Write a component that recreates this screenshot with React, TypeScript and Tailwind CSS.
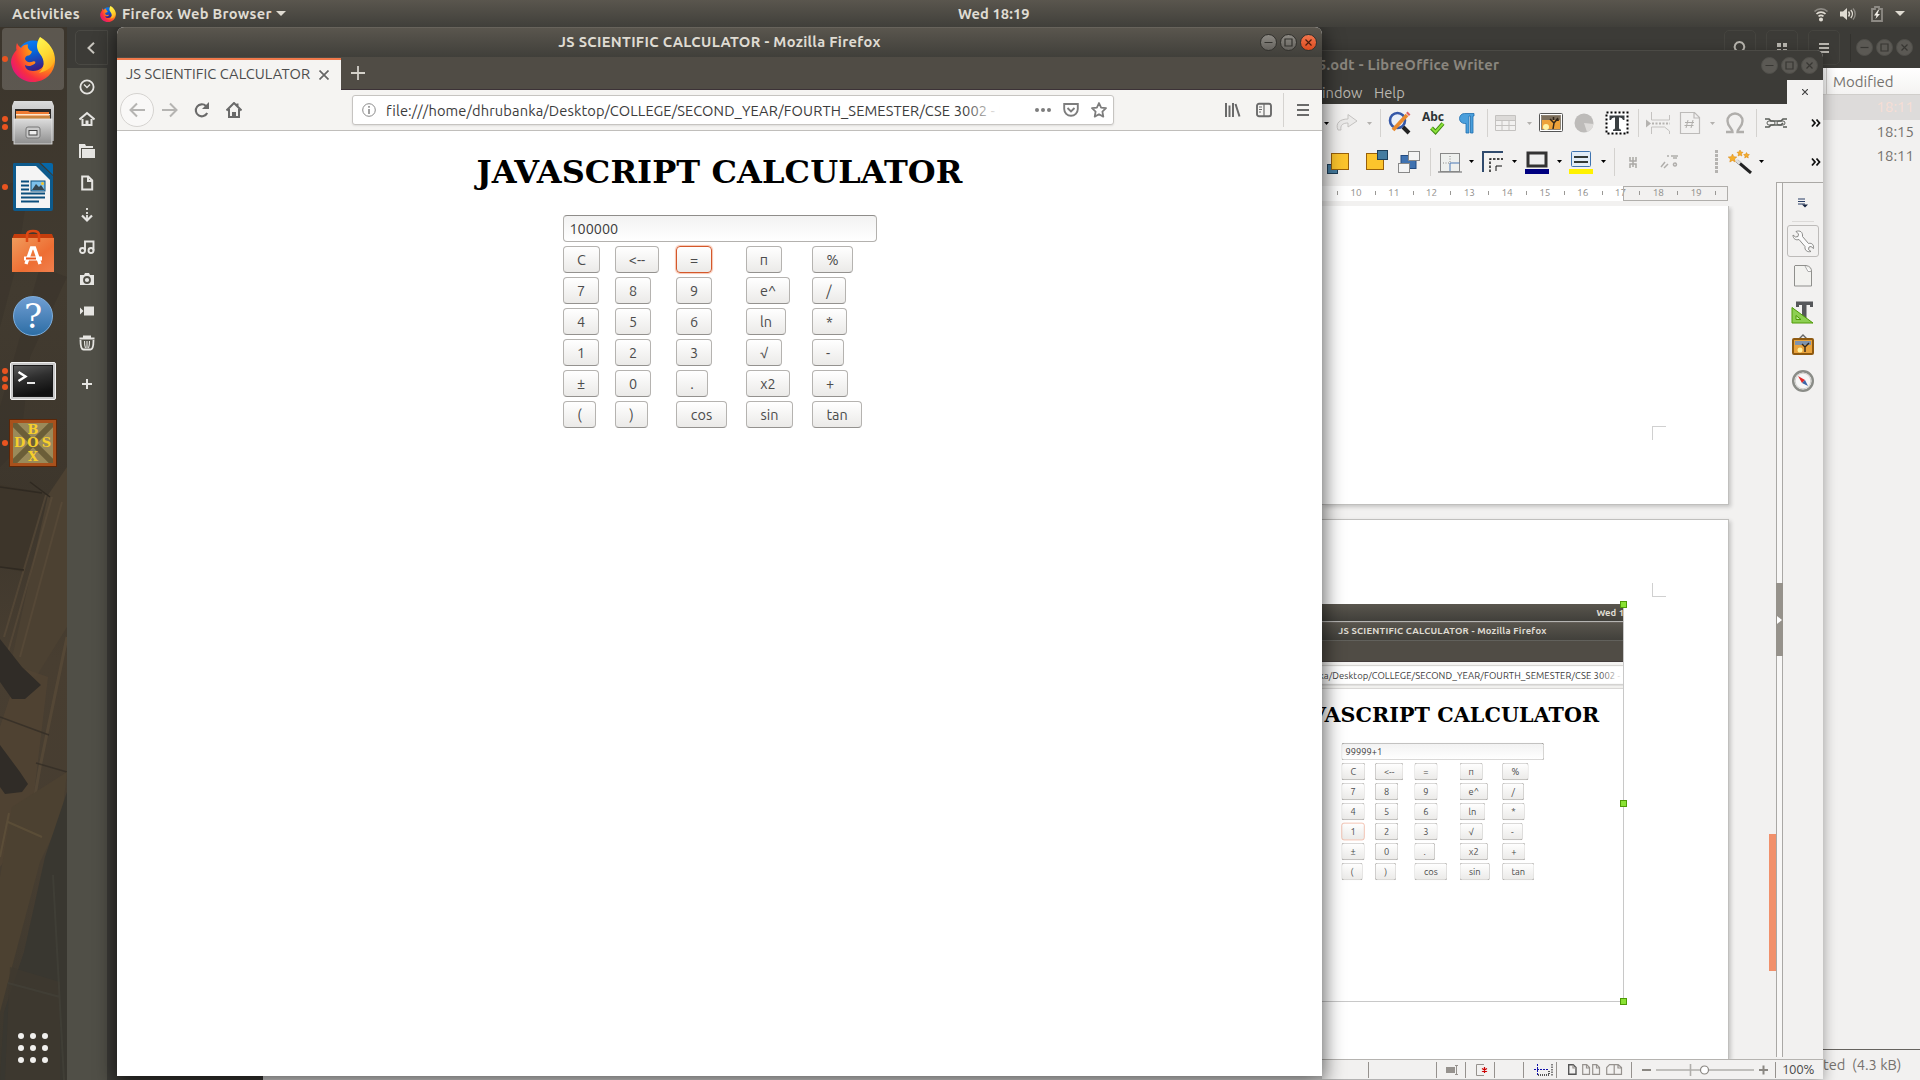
import React from "react";

type Kids = { children?: React.ReactNode };

const UI = "font-['Ubuntu','Noto_Sans',sans-serif]";

const calcRows: [string, string][][] = [
  [["C", "w-[37px]"], ["<--", "w-[44px]"], ["=", "w-[36px]"], ["п", "w-[36px]"], ["%", "w-[41px]"]],
  [["7", "w-[36px]"], ["8", "w-[36px]"], ["9", "w-[36px]"], ["e^", "w-[44px]"], ["/", "w-[34px]"]],
  [["4", "w-[36px]"], ["5", "w-[36px]"], ["6", "w-[36px]"], ["ln", "w-[40px]"], ["*", "w-[35px]"]],
  [["1", "w-[36px]"], ["2", "w-[36px]"], ["3", "w-[36px]"], ["√", "w-[36px]"], ["-", "w-[32px]"]],
  [["±", "w-[36px]"], ["0", "w-[36px]"], [".", "w-[32px]"], ["x2", "w-[44px]"], ["+", "w-[36px]"]],
  [["(", "w-[33px]"], [")", "w-[33px]"], ["cos", "w-[51px]"], ["sin", "w-[47px]"], ["tan", "w-[50px]"]],
];

function Calculator({ value, focus, dim }: { value: string; focus: string; dim?: boolean }) {
  const focusRing = dim ? "border-[#eba48a]" : "border-[#d4582b] shadow-[0_0_1px_1px_#f7c5b1]";
  return (
    <div className="w-[314px]">
      <div className="flex h-[27px] items-center rounded-[4px] border border-[#b3b1ae] border-t-[#8f8d8a] bg-linear-to-b from-[#f2f2f2] to-white pt-[2px] pl-1.5 text-[14.4px] text-[#3c3c3c]">
        {value}
      </div>
      <div className="mt-1 flex flex-col gap-1">
        {calcRows.map((row, i) => (
          <div key={i} className="grid grid-cols-[52px_61px_70px_66px_65px]">
            {row.map(([t, w]) => (
              <button
                key={t}
                className={`${w} flex h-[27px] items-center justify-center rounded-[4px] border pt-px pl-px text-[14.4px] leading-none text-[#4c4c4c] bg-linear-to-b from-white to-[#ebeae8] ${
                  t === focus ? focusRing : "border-[#b5b3b0] border-b-[#94928f]"
                }`}
              >
                {t}
              </button>
            ))}
          </div>
        ))}
      </div>
    </div>
  );
}

function FirefoxLogo({ className }: { className: string }) {
  const id = React.useId().replace(/[^a-zA-Z0-9]/g, "");
  return (
    <svg viewBox="0 0 44 45" className={className}>
      <defs>
        <radialGradient id={id + "a"} cx="0.85" cy="0.2" r="1">
          <stop offset="0" stopColor="#fff04a" />
          <stop offset="0.3" stopColor="#ffb916" />
          <stop offset="0.55" stopColor="#ff7a1c" />
          <stop offset="0.78" stopColor="#f8303f" />
          <stop offset="1" stopColor="#e3137f" />
        </radialGradient>
        <linearGradient id={id + "b"} x1="0" y1="0" x2="0.3" y2="1">
          <stop offset="0" stopColor="#0a84ff" />
          <stop offset="0.5" stopColor="#0663d8" />
          <stop offset="1" stopColor="#3a1f86" />
        </linearGradient>
        <linearGradient id={id + "c"} x1="0.3" y1="0" x2="0.7" y2="1">
          <stop offset="0" stopColor="#fff44f" />
          <stop offset="0.5" stopColor="#ffd832" />
          <stop offset="1" stopColor="#ffa21a" />
        </linearGradient>
      </defs>
      <circle cx="22" cy="19" r="15.5" fill={`url(#${id}b)`} />
      <path d="M6 6C5 9 5 11 5.500 13C2 17 0 21 0 25C1 37 11 45 22 45C34 45 44 36 44 23C44 14 39 6 29 0C31 8 36 12 35 21C34 30 29 34 22 34C17 34 14 31 14 28C17 30 21 29 24 26.500C25 25 24 24 22 24.500C18 26 15 25 14 22C14 20 16 18 18 18.500C20 17 20.500 16 21 14.500C18 13 16 11 17 7.500C14 7 11 9 10 11C8 9.500 7 8 6 6Z" fill={`url(#${id}a)`} />
      <path d="M29 0C25 6 25 12 29 17C34 23 34 31 28 36C37 34 43 29 43.500 22C42 12 37 6 29 0Z" fill={`url(#${id}c)`} />
    </svg>
  );
}

function TopBar() {
  return (
    <div className={`flex h-[27px] items-center bg-linear-to-b from-[#5a564e] to-[#403f3a] text-[14.67px] font-bold text-[#dfdbd2] ${UI}`}>
      <span className="ml-3 w-[88px] tracking-[0.27px] whitespace-nowrap">Activities</span>
      <FirefoxLogo className="h-4 w-4" />
      <span className="ml-1.5 w-[154px] tracking-[0.32px] whitespace-nowrap">Firefox Web Browser</span>
      <Caret className="h-[5px] w-2.5 text-[#dfdbd2]" />
      <span className="ml-[672px] tracking-[0.1px] whitespace-nowrap">Wed 18:19</span>
      <div className="ml-auto flex items-center pr-[15px]">
        <svg viewBox="0 0 16 16" className="h-4 w-4" fill="none" stroke="#dfdbd2" strokeWidth="1.700">
          <path d="M1.500 5.500a9.500 9.500 0 0 1 13 0" stroke="#8d8a84" />
          <path d="M3.500 8a6.500 6.500 0 0 1 9 0M5.500 10.300a4 4 0 0 1 5 0" />
          <circle cx="8" cy="13.500" r="1.200" fill="#dfdbd2" />
        </svg>
        <svg viewBox="0 0 16 16" className="ml-[11px] h-4 w-4" fill="none" stroke="#dfdbd2" strokeWidth="1.400">
          <path d="M0 5.500h3L7 2v12L3 10.500H0z" fill="#dfdbd2" stroke="none" />
          <path d="M8.500 5.500a4 4 0 0 1 0 5M10.800 4a6 6 0 0 1 0 8" />
          <path d="M13 2.500a8 8 0 0 1 0 11" stroke="#8d8a84" />
        </svg>
        <svg viewBox="0 0 12 16" className="ml-[15px] h-4 w-3">
          <path d="M4 1h4v2h3v12H1V3h3z" fill="none" stroke="#8d8a84" strokeWidth="1.800" />
          <path d="M7 4L3 9.500h2.500L4.500 13L9 8H6.500L8 4z" fill="#f0ede6" />
        </svg>
        <Caret className="ml-3 h-[5px] w-2.5 text-[#dfdbd2]" />
      </div>
    </div>
  );
}

function Caret({ className }: { className: string }) {
  return (
    <svg viewBox="0 0 10 5" className={className} preserveAspectRatio="none">
      <path d="M0 0h10L5 5z" fill="currentColor" />
    </svg>
  );
}

function WinButtons({ active, className = "" }: { active?: boolean; className?: string }) {
  const ring = active
    ? "border-[#33322e] bg-linear-to-b from-[#8d8a84] to-[#65635e] text-[#33322e]"
    : "border-[#504f4a] bg-[#5b5954] text-[#383733]";
  const close = active ? "border-[#33322e] bg-linear-to-b from-[#f1754c] to-[#dc4a1c] text-[#4a1c0c]" : ring;
  return (
    <div className={`flex gap-[3px] ${className}`}>
      {["M4.500 8.500h8", "M5 5h7v7H5z", "M5.500 5.500l6 6M11.500 5.500l-6 6"].map((d, i) => (
        <span key={d} className={`flex h-[17px] w-[17px] items-center justify-center rounded-full border ${i === 2 ? close : ring}`}>
          <svg viewBox="0 0 17 17" className="h-[17px] w-[17px] shrink-0" fill="none" stroke="currentColor" strokeWidth="1.200">
            <path d={d} />
          </svg>
        </span>
      ))}
    </div>
  );
}

function FirefoxWindow({ value, focus, shadow, dim }: { value: string; focus: string; shadow: string; dim?: boolean }) {
  return (
    <div className={`flex h-[1049px] w-[1205px] flex-col overflow-hidden rounded-t-[7px] bg-white ${UI} ${shadow}`}>
      <div className="grid h-[30px] shrink-0 grid-cols-[1fr_auto_1fr] items-center border-t border-[#67635b] bg-linear-to-b from-[#5a564e] to-[#403f3a]">
        <span />
        <span className="-mt-0.5 text-[14.67px] font-bold tracking-[0.32px] whitespace-nowrap text-[#dfdbd2]">JS SCIENTIFIC CALCULATOR - Mozilla Firefox</span>
        <WinButtons active className="mr-[5px] justify-self-end" />
      </div>
      <div className="flex h-[33px] shrink-0 border-b border-[#3c3237] bg-[#504c45]">
        <div className="mt-px -mb-px flex h-8 w-[224px] items-center border-t-2 border-[#f0794b] bg-[#f5f4f2] pl-[9px]">
          <span className="-mt-0.5 w-[193px] text-[14.67px] tracking-[0.05px] whitespace-nowrap text-[#4c4c4c]">JS SCIENTIFIC CALCULATOR</span>
          <svg viewBox="0 0 10 10" className="-mt-px h-2.5 w-2.5" stroke="#666" strokeWidth="1.700"><path d="M.5.500l9 9M9.500.500l-9 9" /></svg>
        </div>
        <svg viewBox="0 0 14 14" className="mt-[9px] ml-[10px] h-3.5 w-3.5" stroke="#d4d1ca" strokeWidth="1.800"><path d="M7 0v14M0 7h14" /></svg>
      </div>
      <div className="flex h-[41px] shrink-0 items-center border-b border-[#c0bebb] bg-[#f5f4f2] text-[#6a6a6a]">
        <span className="ml-[3px] flex h-[34px] w-[34px] items-center justify-center rounded-full border border-[#d5d3d0] bg-[#f9f8f7]">
          <svg viewBox="0 0 16 16" className="h-4 w-4" fill="none" stroke="#b5b4b2" strokeWidth="2"><path d="M16 8H1.500M8 1.500L1.500 8L8 14.500" /></svg>
        </span>
        <svg viewBox="0 0 16 16" className="ml-2 h-4 w-4" fill="none" stroke="#b5b4b2" strokeWidth="2"><path d="M0 8h14.500M8 1.500L14.500 8L8 14.500" /></svg>
        <svg viewBox="0 0 16 16" className="ml-[16px] h-4 w-4" fill="none" stroke="currentColor" strokeWidth="2.100">
          <path d="M13.200 11A6 6 0 1 1 12 4" /><path d="M15 0v7H8z" fill="currentColor" stroke="none" />
        </svg>
        <svg viewBox="0 0 16 16" className="ml-[16px] h-4 w-4" fill="none" stroke="currentColor" strokeWidth="2">
          <path d="M0.500 8.500L8 1L15.500 8.500M3 7v8h10V7M11.500 4V1.500" /><path d="M6 15v-5h4v5z" fill="currentColor" stroke="none" />
        </svg>
        <div className="ml-[110px] flex h-[30px] w-[762px] items-center rounded-[3px] border border-[#c6c4c1] bg-white pl-2.5 shadow-[0_1px_2px_#00000018]">
          <svg viewBox="0 0 14 14" className="-ml-px h-3.5 w-3.5" fill="none" stroke="#8a8a8a"><circle cx="7" cy="7" r="6.300" /><path d="M7 6v5M7 3v1.800" strokeWidth="1.600" /></svg>
          <div className="relative mt-0.5 ml-[10px] w-[614px] overflow-hidden text-[14.67px] tracking-[0.12px] whitespace-nowrap text-[#3c3c3c]">
            file:///home/dhrubanka/Desktop/COLLEGE/SECOND_YEAR/FOURTH_SEMESTER/CSE 3002 - I
            <span className="absolute inset-y-0 right-0 w-9 bg-linear-to-r from-transparent to-white" />
          </div>
          <svg viewBox="0 0 16 4" className="ml-[35px] h-1 w-4" fill="#7d7d7d"><circle cx="2" cy="2" r="2" /><circle cx="8" cy="2" r="2" /><circle cx="14" cy="2" r="2" /></svg>
          <svg viewBox="0 0 16 16" className="ml-3 h-4 w-4" fill="none" stroke="#7d7d7d" strokeWidth="1.900">
            <path d="M1.200 2h13.600v5a6.800 6.800 0 0 1-13.600 0z" /><path d="M4.500 6L8 9.500L11.500 6" />
          </svg>
          <svg viewBox="0 0 16 16" className="ml-3 h-4 w-4" fill="none" stroke="#7d7d7d" strokeWidth="1.800"><path d="M8 1l2.100 4.600 4.900.6-3.600 3.400.9 5L8 12.200l-4.300 2.400.9-5L1 6.200l4.900-.6z" strokeLinejoin="round" /></svg>
        </div>
        <svg viewBox="0 0 16 16" className="ml-[111px] h-4 w-4" fill="none" stroke="currentColor" strokeWidth="2"><path d="M1 1v14M4.500 3.500v11.500M8 1v14M10.500 2l4 12.500" /></svg>
        <svg viewBox="0 0 16 16" className="ml-[15px] h-4 w-4" fill="none" stroke="currentColor" strokeWidth="1.900"><rect x="1" y="1.800" width="14" height="12.400" rx="2" /><path d="M8 2v12" strokeWidth="1.200" /><path d="M3 5h3M3 7.500h3M3 10h2" strokeWidth="1.100" /></svg>
        <span className="ml-[11px] h-[34px] w-px bg-[#d5d3d0]" />
        <svg viewBox="0 0 12 12" className="ml-[13px] h-3 w-3" stroke="currentColor" strokeWidth="2"><path d="M0 1h12M0 6h12M0 11h12" /></svg>
      </div>
      <div className="flex flex-col items-center pt-[23px]">
        <h1 className="font-['DejaVu_Serif',serif] text-[32px] leading-[37px] font-bold tracking-[0.1px] whitespace-nowrap text-black">JAVASCRIPT CALCULATOR</h1>
        <div className="mt-[24px]">
          <Calculator value={value} focus={focus} dim={dim} />
        </div>
      </div>
    </div>
  );
}

function Tile({ dots, active, children }: Kids & { dots: number; active?: boolean }) {
  return (
    <div className="relative flex h-16 items-center">
      <span className={`ml-0.5 flex h-[62px] w-[62px] items-center justify-center rounded-[4px] ${active ? "bg-[#ffffff2b]" : ""}`}>{children}</span>
      <span className="absolute top-0 left-0.5 flex h-full flex-col justify-center gap-[2px]">
        {Array.from({ length: dots }, (_, i) => (
          <span key={i} className="h-1.5 w-1.5 rounded-full bg-[#e95420]" />
        ))}
      </span>
    </div>
  );
}

function Dock() {
  return (
    <div className="relative flex h-[1053px] w-[67px] flex-col overflow-hidden bg-[#433c31]">
      <svg viewBox="0 0 67 1053" className="absolute inset-0 h-full w-full" preserveAspectRatio="none">
        <defs>
          <linearGradient id="wall" x1="0" y1="0" x2="0" y2="1">
            <stop offset="0" stopColor="#3b352c" /><stop offset="0.25" stopColor="#423b30" /><stop offset="0.45" stopColor="#3d362c" /><stop offset="0.6" stopColor="#483e31" /><stop offset="0.8" stopColor="#463d31" /><stop offset="1" stopColor="#3b372e" />
          </linearGradient>
        </defs>
        <rect width="67" height="1053" fill="url(#wall)" />
        <path d="M0 160L30 150L16 240L0 300zM67 250L30 330L20 420L0 440V380L40 240z" fill="#37312a" opacity=".5" />
        <path d="M0 458L45 466L24 545L0 540z" fill="#3d352a" />
        <path d="M48 468L67 440V600L36 650L10 640z" fill="#4c4132" />
        <path d="M46 468L4 610M52 470L8 625M62 475L20 630" stroke="#5c4d3a" strokeWidth="2" opacity=".6" fill="none" />
        <path d="M0 540L24 543M30 455L50 470M0 460L42 466" stroke="#2f2921" strokeWidth="1.500" fill="none" />
        <path d="M48 650L30 800L0 840V700L20 640z" fill="#514433" opacity=".8" />
        <path d="M67 610L40 740L32 785" stroke="#5a4b39" strokeWidth="3" opacity=".7" fill="none" />
        <path d="M0 612L22 640L41 658L25 672L12 672L0 655zM0 718L20 745L28 757L22 765L5 767L0 760z" fill="#302c27" />
        <path d="M0 690L38 704L49 708M36 736L67 745" stroke="#332d25" strokeWidth="1.500" fill="none" opacity=".8" />
        <path d="M12 780L67 745L62 790L40 835L0 985V850z" fill="#4c4131" />
        <path d="M67 765L45 830L24 925L4 985L0 1053H67z" fill="#393730" />
        <path d="M10 940L60 955V1053H5z" fill="#3e392f" opacity=".7" />
        <path d="M9 786L0 830M8 795L42 810" stroke="#61523b" strokeWidth="2" opacity=".7" fill="none" />
        <path d="M53 848L64 1053M8 956L60 970" stroke="#45433a" strokeWidth="2" opacity=".6" fill="none" />
      </svg>
      <div className="relative flex grow flex-col">
        <Tile dots={1} active><FirefoxLogo className="h-[45px] w-11" /></Tile>
        <Tile dots={2}>
          <svg viewBox="0 0 42 44" className="h-11 w-[42px]">
            <defs><linearGradient id="cab" x1="0" y1="0" x2="0" y2="1"><stop offset="0" stopColor="#dcdcdc" /><stop offset="1" stopColor="#8e8e8e" /></linearGradient></defs>
            <path d="M2 0h38l2 5v35H0V5z" fill="url(#cab)" />
            <rect x="3" y="8" width="36" height="10" fill="#2d2a28" />
            <path d="M4 10h12l2 1h19v7H4z" fill="#ef7b33" /><path d="M4 13h34v1.500H4z" fill="#fbe9cf" /><path d="M4 15h34v3H4z" fill="#c9853f" />
            <rect x="2" y="18" width="38" height="25" fill="url(#cab)" stroke="#e9e9e9" strokeWidth=".8" />
            <rect x="14" y="26" width="14" height="11" rx="2" fill="#c9c9c9" stroke="#777" /><rect x="17" y="29.500" width="8" height="4.500" fill="#eee" stroke="#444" />
          </svg>
        </Tile>
        <Tile dots={1}>
          <svg viewBox="0 0 40 48" className="h-12 w-10">
            <path d="M3 0h23l14 13v33a2 2 0 0 1-2 2H2a2 2 0 0 1-2-2V2a2 2 0 0 1 3-2z" fill="#0d5a8c" />
            <path d="M28 0h10a2 2 0 0 1 2 2v10z" fill="#0667a8" />
            <path d="M3 3h20l14 14v28H3z" fill="#f4f4f4" />
            <path d="M8 18.500h8M8 22.500h8M8 26.500h8M8 30.500h24M8 34.500h24M8 38.500h18" stroke="#0b4f7d" strokeWidth="2" />
            <rect x="18" y="18" width="14" height="10" fill="#7dc0ea" stroke="#0b4f7d" /><path d="M19 27l4-6 3 3 2-2 3.500 5z" fill="#37474f" /><circle cx="29.500" cy="20.500" r="1.500" fill="#f5c52c" />
          </svg>
        </Tile>
        <Tile dots={0}>
          <svg viewBox="0 0 42 43" className="-mt-0.5 h-[43px] w-[42px]">
            <defs><linearGradient id="bag" x1="0" y1="0" x2="1" y2="1"><stop offset="0" stopColor="#f09b5c" /><stop offset="0.6" stopColor="#ee6e33" /><stop offset="1" stopColor="#f0804e" /></linearGradient></defs>
            <path d="M2 5h38l2 5H0z" fill="#c43d0c" /><rect y="9" width="42" height="34" fill="url(#bag)" />
            <path d="M15 13V6q0-4 6-4t6 4v7" fill="none" stroke="#dd4814" strokeWidth="2.500" />
            <path d="M14 35L19.500 19h3L28 35" fill="none" stroke="#fff" strokeWidth="3.400" /><path d="M12 29.500h18" stroke="#fff" strokeWidth="4" /><path d="M14 29.500h10" stroke="#ee5a1e" strokeWidth="2" />
          </svg>
        </Tile>
        <Tile dots={0}>
          <span className="mt-0.5 flex h-10 w-10 items-center justify-center rounded-full border border-[#7fb0df] bg-linear-to-b from-[#6f9ed3] to-[#2c6ea5] font-['DejaVu_Serif',serif] text-[34px] leading-none text-white">?</span>
        </Tile>
        <Tile dots={3}>
          <svg viewBox="0 0 46 38" className="mt-1 h-[38px] w-[46px]">
            <defs><linearGradient id="term" x1="0" y1="0" x2="0.3" y2="1"><stop offset="0" stopColor="#5a5a5a" /><stop offset="0.5" stopColor="#2e2e2e" /><stop offset="1" stopColor="#111" /></linearGradient></defs>
            <rect x=".5" y=".5" width="45" height="37" rx="1.500" fill="#c9c9c9" stroke="#f2f2f2" /><rect x="3.500" y="3.500" width="39" height="31" fill="url(#term)" stroke="#1a1a1a" />
            <path d="M8.500 10l7 4.500-7 4.500" fill="none" stroke="#fff" strokeWidth="2.400" /><path d="M17 21h8" stroke="#fff" strokeWidth="1.800" />
          </svg>
        </Tile>
        <Tile dots={1}>
          <div className="relative grid h-12 w-12 grid-cols-3 grid-rows-3 place-items-center border-4 border-[#a9511c] bg-[#9a8a5a] font-['DejaVu_Serif',serif] text-[13px] leading-none font-bold text-[#f6cf2b] outline outline-[#5b2608] -outline-offset-1">
            <svg viewBox="0 0 40 40" className="absolute inset-0 h-full w-full"><path d="M0 0L40 40M40 0L0 40" stroke="#6b5e38" strokeWidth="6" /></svg>
            <span className="relative col-start-2 row-start-1">B</span>
            <span className="relative col-start-1 row-start-2">D</span>
            <span className="relative col-start-2 row-start-2">O</span>
            <span className="relative col-start-3 row-start-2">S</span>
            <span className="relative col-start-2 row-start-3">X</span>
          </div>
        </Tile>
        <div className="mt-auto mb-[17px] ml-[18px] grid w-[30px] grid-cols-3 gap-1.5">
          {Array.from({ length: 9 }, (_, i) => (
            <span key={i} className="h-1.5 w-1.5 rounded-full bg-[#f1f0ee]" />
          ))}
        </div>
      </div>
    </div>
  );
}

const places: React.ReactNode[] = [
  <g key="recent" fill="none" stroke="#e6e5e2" strokeWidth="1.800"><circle cx="8" cy="8" r="6.600" /><path d="M5 5.500L8 8.500L11 5.500" strokeWidth="1.400" /></g>,
  <g key="home" fill="none" stroke="#e6e5e2" strokeWidth="2"><path d="M.5 8.500L8 2l7.500 6.500M3.500 8v6h9V8" /><path d="M8 14V9.500" strokeWidth="3" /></g>,
  <g key="dir" fill="#e6e5e2"><path d="M0 1h6l1 2h7v2H2v10H0z" /><path d="M3 6h13v9H3z" /></g>,
  <path key="doc" d="M3.200 1.500h6l4 4v9h-10zM9 2v4h4" fill="none" stroke="#e6e5e2" strokeWidth="2" />,
  <g key="dl" fill="none" stroke="#e6e5e2" strokeWidth="2.200"><path d="M8 1v2M8 5v2M8 8v5" strokeWidth="1.800" /><path d="M3 8.500L8 13.500L13 8.500" /></g>,
  <g key="music" fill="none" stroke="#e6e5e2" strokeWidth="1.900"><circle cx="3.500" cy="11.500" r="2.500" /><circle cx="12" cy="11.500" r="2.500" /><path d="M6 11.500V2.500h8.500v9" /></g>,
  <g key="cam"><path d="M1 4h4l1-2h4l1 2h4v10H1z" fill="#e6e5e2" /><circle cx="8" cy="9" r="3" fill="none" stroke="#504f47" strokeWidth="1.800" /></g>,
  <g key="vid" fill="#e6e5e2"><path d="M5 3.500h10v9H5zM1 4.500L4.500 8L1 11.500z" /></g>,
  <g key="trash" fill="none" stroke="#e6e5e2" strokeWidth="1.800"><path d="M.5 3.500h15M4 1.500h8M1.500 5q0 9.500 3 9.500h7q3 0 3-9.500" /><path d="M5.500 6q0 5 1 7M8 6v7M10.500 6q0 5-1 7" strokeWidth="1.100" /></g>,
];

function FilesWindow() {
  return (
    <div className={`flex h-[1053px] w-[1853px] flex-col bg-[#f2f1f0] ${UI}`}>
      <div className="flex h-[41px] shrink-0 items-center bg-[#3c3b37]">
        <span className="ml-2 flex h-[35px] w-[33px] items-center justify-center rounded-l-[5px] border border-[#4a4944] pr-0.5">
          <svg viewBox="0 0 8 12" className="h-3 w-2" fill="none" stroke="#c9c6bf" strokeWidth="2"><path d="M7 .8L1.500 6L7 11.200" /></svg>
        </span>
        <div className="ml-auto flex items-center gap-2.5">
          {[
            <path key="s" d="M7.500 2a4.800 4.800 0 1 1-.1 0zM10.500 10.500l4 4" fill="none" stroke="#b9b6af" strokeWidth="2" />,
            <path key="g" d="M3 3h4v4H3zM9 3h4v4H9zM3 9h4v4H3zM9 9h4v4H9z" fill="#b9b6af" />,
            <path key="m" d="M3 4h10M3 8h10M3 12h10" fill="none" stroke="#b9b6af" strokeWidth="2" />,
          ].map((p, i) => (
            <span key={i} className="flex h-[35px] w-8 items-center justify-center rounded-[5px] border border-[#45443f]">
              <svg viewBox="0 0 16 16" className="h-4 w-4">{p}</svg>
            </span>
          ))}
        </div>
        <span className="ml-2.5 h-7 w-px bg-[#33322e]" />
        <WinButtons className="mr-[7px] ml-[5px]" />
      </div>
      <div className="flex min-h-0 grow">
        <div className="flex w-[40px] flex-col items-center bg-[#504f47] pt-[3px] pr-px">
          {places.map((p, i) => (
            <span key={i} className="flex h-8 items-center"><svg viewBox="0 0 16 16" className="h-4 w-4">{p}</svg></span>
          ))}
          <svg viewBox="0 0 10 10" className="mt-[20px] h-2.5 w-2.5" stroke="#e6e5e2" strokeWidth="2"><path d="M5 0v10M0 5h10" /></svg>
        </div>
        <div className="w-[156px] bg-[#3c3b37]" />
        <div className="ml-auto flex w-[97px] flex-col text-[14.67px] text-[#75726e]">
          <div className="flex h-[27px] items-center border-b border-[#d0cecb] bg-linear-to-b from-white to-[#f4f3f2]">
            <span className="ml-[3px] h-full w-px bg-[#d0cecb]" />
            <span className="mt-0.5 ml-1.5 text-[15px]">Modified</span>
          </div>
          <div className="flex h-[25px] items-center justify-end bg-[#dddbda] pr-1.5 text-[15px] text-[#f7ded5]">18:11</div>
          <div className="flex h-6 items-center justify-end pr-1.5 text-[15px]">18:15</div>
          <div className="flex h-6 items-center justify-end pr-1.5 text-[15px]">18:11</div>
          <div className="mt-auto flex h-[31px] items-center border-t border-[#66635f] text-[14.67px] whitespace-nowrap">ted&nbsp; (4.3 kB)</div>
        </div>
      </div>
    </div>
  );
}

function I({ ml, children }: Kids & { ml: string }) {
  return <svg viewBox="0 0 24 24" className={`h-6 w-6 shrink-0 ${ml}`} fill="none">{children}</svg>;
}
function Sep({ ml }: { ml: string }) {
  return <span className={`h-7 w-px shrink-0 bg-[#d4d2cf] ${ml}`} />;
}
function Drop({ ml, dim }: { ml: string; dim?: boolean }) {
  return <span className={`flex w-2 shrink-0 justify-center ${ml} ${dim ? "text-[#b3b1ae]" : "text-black"}`}><Caret className="h-[3px] w-[5px]" /></span>;
}
function More({ ml }: { ml: string }) {
  return <svg viewBox="0 0 12 12" className={`h-3 w-3 shrink-0 ${ml}`} fill="none" stroke="#111" strokeWidth="1.800"><path d="M2 2.500L5 6L2 9.500M6.500 2.500L9.500 6L6.500 9.500" /></svg>;
}

const sky = (
  <>
    <rect x=".5" y="2.500" width="23" height="18" rx="1" fill="#fff" stroke="#555" />
    <rect x="2.500" y="4.500" width="19" height="14" fill="#eda23a" stroke="#666" strokeWidth=".7" />
    <path d="M3 5h18v4H3z" fill="#7d6f5c" /><circle cx="7" cy="16" r="3" fill="#fff3a8" />
    <path d="M14 18l1-6-4-4M15 12l4-5M14.500 9V6M17 9.500l3-.5" stroke="#33271a" strokeWidth="1.500" />
  </>
);

function ToolbarStandard() {
  return (
    <div className="flex h-[38px] items-center">
      <Drop ml="" />
      <I ml="ml-[5px]"><path d="M3 19C0 12 5 8 13 8V3.500L22 10L13 16V12C8 12 5 14 6 19z" fill="#ebeae9" stroke="#c4c2c0" /></I>
      <Drop ml="ml-1.5" dim />
      <Sep ml="ml-[7px]" />
      <I ml="ml-[7px]"><circle cx="9.500" cy="9.500" r="7.500" fill="#e9eff8" stroke="#3558a8" strokeWidth="2.600" /><path d="M15 16l6 6" stroke="#222" strokeWidth="4" /><path d="M5 19L19 4" stroke="#e98a2e" strokeWidth="3.800" /><path d="M19.500 3.500l1.500-1.500" stroke="#e06060" strokeWidth="4" /></I>
      <I ml="ml-[9px]"><text x="12" y="10" textAnchor="middle" fontSize="12" fontWeight="700" fill="#2d3436" fontFamily="Noto Sans">Abc</text><path d="M10.500 17l4 4L22 12.500" stroke="#3f8a12" strokeWidth="4" /><path d="M10.500 17l4 4L22 12.500" stroke="#8be03a" strokeWidth="2" /></I>
      <I ml="ml-2.5"><path d="M19 2.500H9.500a5 5 0 0 0 0 10H11V22h3V5h1.500v17H18V5h1z" fill="#4a9fdc" stroke="#1f6fae" strokeWidth=".8" /></I>
      <Sep ml="ml-2" />
      <I ml="ml-1.5"><path d="M1.500 4.500h20v15h-20zM1.500 9.500h20M1.500 14.500h20M8 4.500v15M15 4.500v15" fill="#f2f1f0" stroke="#c4c2c0" /><path d="M2 5h19v4H2z" fill="#dcdad8" /></I>
      <Drop ml="ml-[7px]" dim />
      <I ml="ml-1.5">{sky}</I>
      <I ml="ml-[9px]"><circle cx="12" cy="12" r="9.500" fill="#bdbbb9" /><path d="M12 12l9.500 1A9.500 9.500 0 0 1 15 21z" fill="#dddbd9" /></I>
      <I ml="ml-[9px]"><rect x="1.500" y="1.500" width="21" height="21" fill="#fff" stroke="#000" strokeWidth="2" strokeDasharray="2 2" /><path d="M4.500 4.500h15v4.500H18q-.5-2.500-3-2.500h-1V17q0 1.500 2 1.500V20H8v-1.500q2 0 2-1.500V6.500H9Q6.500 6.500 6 9H4.500z" fill="#3a3f42" /></I>
      <Sep ml="ml-[9px]" />
      <I ml="ml-[7px]"><path d="M5.500 1v8h18V4M5.500 23v-7h13l5 4v3" stroke="#c4c2c0" /><path d="M6 12.500h18" stroke="#b5b3b0" strokeWidth="2" strokeDasharray="2 1.500" /><path d="M0 8.500l5 4-5 4z" fill="#b5b3b0" /></I>
      <I ml="ml-2"><path d="M2.500 1.500h14l5 5v16h-19zM16 2v5h5" stroke="#bdbbb9" strokeWidth="1.200" /><path d="M8 17l2-8M13 17l2-8M7 11.500h9M6.500 14.500h9" stroke="#b0aeab" /></I>
      <Drop ml="ml-1.5" dim />
      <I ml="ml-[7px]"><path d="M3 21h6.500c0-3.500-5-5.500-5-11a7.500 7.500 0 0 1 15 0c0 5.500-5 7.500-5 11H21" stroke="#b0aeab" strokeWidth="2.400" /></I>
      <Sep ml="ml-[9px]" />
      <I ml="ml-[7px]"><path d="M1 8h4l2 2h10l2-2h4M1 16h4l2-2h10l2-2M19 16h4" stroke="#5a5d58" strokeWidth="1.700" /><rect x="3" y="10" width="8" height="4" rx="2" stroke="#5a5d58" /><rect x="13" y="10" width="8" height="4" rx="2" stroke="#5a5d58" /></I>
      <More ml="ml-[22px]" />
    </div>
  );
}

function ToolbarDrawing() {
  return (
    <div className="flex h-[38px] items-center pt-px">
      <I ml="ml-1"><rect x="1.500" y="14.500" width="10" height="9" fill="#457c9f" stroke="#1e3f58" /><rect x="5.500" y="3.500" width="17" height="16" fill="#fcc42c" stroke="#99600a" /></I>
      <I ml="ml-[15px]"><rect x="1.500" y="3.500" width="17" height="16" fill="#fcc42c" stroke="#99600a" /><rect x="12.500" y="0.500" width="10" height="9" fill="#457c9f" stroke="#1e3f58" /></I>
      <I ml="ml-2"><rect x="4" y="5.500" width="15" height="13" fill="#3f72b0" stroke="#224a80" /><rect x="11.500" y="1.500" width="11" height="9" fill="#f4f4f4" stroke="#888" /><rect x="1.500" y="13.500" width="11" height="9" fill="#f4f4f4" stroke="#888" /></I>
      <Sep ml="ml-[9px]" />
      <I ml="ml-[7px]"><path d="M0 22h24" stroke="#aaa" strokeWidth="2" /><rect x="2.500" y="3.500" width="19" height="18" fill="#eef0ee" stroke="#888" /><path d="M12 6v7M5 13h7" stroke="#888" strokeDasharray="1 1.500" /><path d="M12 21v-8h9.500" stroke="#4a78b5" /></I>
      <Drop ml="ml-[5px]" />
      <I ml="ml-[6px]"><path d="M2 22V2h20" stroke="#2f4a6d" strokeWidth="2" /><path d="M9 22V9h13" stroke="#111" strokeWidth="1.400" strokeDasharray="2.500 1.500" /><path d="M15 21v-5h6" stroke="#111" /></I>
      <Drop ml="ml-[5px]" />
      <I ml="ml-[7px]"><rect x="3" y="3" width="18" height="13" fill="#eee" stroke="#333" strokeWidth="3" /><path d="M0 21.500h24" stroke="#000080" strokeWidth="5" /></I>
      <Drop ml="ml-[6px]" />
      <I ml="ml-[6px]"><rect x="2.500" y="1.500" width="19" height="15" rx="1" fill="#e2edf7" stroke="#3f74b0" /><path d="M5 7h14M5 12h14" stroke="#333a36" strokeWidth="2.200" /><path d="M0 21.500h24" stroke="#fff200" strokeWidth="5" /></I>
      <Drop ml="ml-[6px]" />
      <Sep ml="ml-[7px]" />
      <I ml="ml-1.5"><path d="M9 7v4h6V7M12 7v10M9 18v-4h6v4" stroke="#aaa8a5" strokeWidth="1.500" /></I>
      <I ml="ml-[11px]"><path d="M5 17l4-5M8 18l4-4M11 6h2M15 6h7M17 8h4M19 13a1.500 1.500 0 1 1-.1 0" stroke="#b0aeab" strokeWidth="1.500" /></I>
      <span className="ml-[35px] h-6 w-[3px] shrink-0 bg-[repeating-linear-gradient(#b5b3b0_0_3px,transparent_3px_4px)]" />
      <I ml="ml-2.5"><path d="M9 11l14 12" stroke="#222" strokeWidth="3" /><path d="M8 10l4 3.500" stroke="#ddd" strokeWidth="3" /><path d="M4.500 4l1.300 2.700 3 .3-2.200 2 .6 3-2.700-1.500L1.800 12l.6-3L.2 7l3-.3zM12 0l1 2 2 .3-1.500 1.500.4 2.200-1.900-1-1.900 1 .4-2.200L9 2.300 11 2zM18.500 2.500l.9 1.800 2 .3-1.500 1.400.4 2-1.800-1-1.800 1 .4-2-1.500-1.400 2-.3z" fill="#f5ae2a" stroke="#d98410" strokeWidth=".5" /></I>
      <Drop ml="ml-[5px]" />
      <More ml="ml-[45px]" />
    </div>
  );
}

function Handle({ className }: { className: string }) {
  return <span className={`absolute h-[7px] w-[7px] border border-[#4e9a06] bg-[#8ae234] ${className}`} />;
}

function Writer() {
  return (
    <div className={`flex h-[1029px] w-[501px] flex-col overflow-hidden rounded-tr-[7px] bg-[#f2f1f0] shadow-[0_4px_14px_#00000060] ${UI}`}>
      <div className="flex h-[30px] shrink-0 items-center border-t border-[#4b4a45] bg-[#3d3c38]">
        <span className="-mt-0.5 ml-[-4px] text-[14.67px] font-bold tracking-[0.3px] whitespace-nowrap text-[#8a867e]">5.odt - LibreOffice Writer</span>
        <WinButtons className="mr-[5px] ml-auto" />
      </div>
      <div className="flex h-6 shrink-0 items-center bg-[#3c3b37] text-[14.67px] text-[#b9b6af]">
        <span className="mt-px w-[52px]">indow</span>
        <span className="mt-px">Help</span>
        <span className="ml-auto flex h-full w-9 items-center justify-center bg-[#f2f1f0]"><svg viewBox="0 0 6 6" className="h-1.5 w-1.5" stroke="#444" strokeWidth="1.200"><path d="M0 0l6 6M6 0L0 6" /></svg></span>
      </div>
      <ToolbarStandard />
      <ToolbarDrawing />
      <div className="mt-[2px] flex min-h-0 grow">
        <div className="flex w-[454px] shrink-0 flex-col">
          <div className="mt-1 flex h-[15px] shrink-0">
            <div className="relative flex w-[406px] bg-linear-to-r from-white from-[301px] to-[#f2f1f0] to-[301px] pl-[15px] text-[10px] leading-[14px] text-[#8f8d8a]">
              {["10", "11", "12", "13", "14", "15", "16", "17", "18", "19", ""].map((n, i) => (
                <span key={i} className="relative w-[37.8px] shrink-0 text-center last:w-1">
                  <span className="absolute top-[5px] left-0 h-[4px] w-px bg-[#9a9895]" />
                  {n}
                </span>
              ))}
              <span className="absolute inset-y-0 right-0 w-[105px] border border-[#b0aeab]" />
            </div>
          </div>
          <div className="relative mt-[5px] flex min-h-0 grow overflow-hidden">
            <div className="flex w-[407px] shrink-0 flex-col gap-[14px]">
              <div className="flex h-[299px] shrink-0 items-end justify-end border-r border-b border-[#c0bfbd] bg-white pr-[62px] pb-[64px] shadow-[2px_2px_4px_#00000030]">
                <span className="h-3.5 w-3.5 border-t border-l border-[#d0d0d0]" />
              </div>
              <div className="relative flex grow items-start justify-end border-t border-r border-[#c0bfbd] bg-white pt-[63px] pr-[62px] shadow-[2px_2px_4px_#00000030]">
                <span className="h-3.5 w-3.5 border-b border-l border-[#d0d0d0]" />
                <div className="absolute top-[84px] right-[104px] h-[398px] w-[303px] border-r border-b border-[#c8c8c8]">
                  <div className="absolute inset-0 overflow-hidden">
                    <div className="absolute -top-[0.5px] left-[-342.6px] w-[1920px] origin-top-left scale-[0.6455]">
                      <TopBar />
                      <div className="ml-[117px]"><FirefoxWindow value="99999+1" focus="1" shadow="" dim /></div>
                    </div>
                  </div>
                  <Handle className="-top-[3px] -right-1" />
                  <Handle className="top-[196px] -right-1" />
                  <Handle className="-right-1 -bottom-1" />
                </div>
              </div>
            </div>
            <span className="mt-[628px] ml-auto h-[137px] w-[7px] bg-[#f1906b]" />
          </div>
        </div>
        <div className="flex h-[875px] grow border-t border-l border-[#aaa8a5]">
          <div className="flex w-[6px] shrink-0 items-start border-r border-[#aaa8a5] bg-[#f8f7f6]">
            <span className="mt-[400px] -ml-px flex h-[73px] w-[7px] shrink-0 items-center bg-[#96928b] pl-px"><svg viewBox="0 0 5 8" className="h-2 w-[5px]"><path d="M0 0l5 4-5 4z" fill="#fff" /></svg></span>
          </div>
          <div className="flex grow flex-col items-center">
            <svg viewBox="0 0 10 10" className="mt-[15px] h-2.5 w-2.5"><path d="M0 1h7M0 3.500h7M0 6h7" stroke="#2a3f66" /><path d="M4 6.500h6l-3 3z" fill="#14233f" /></svg>
            <span className="mt-[13px] h-px w-[22px] bg-[#dcdad8]" />
            <span className="mt-[3px] flex h-8 w-8 items-center justify-center rounded-[3px] border border-[#bdbbb9]">
              <svg viewBox="0 0 24 24" className="h-6 w-6"><path d="M2 6l2.500 2 2.500-.500.500-2.500L5 2.500C9 1 12 3 11.500 7.500l6 7C21 13.500 23 16 22.500 19.500L20 17.500l-2 .5-.5 2.500 2.500 2C16 23.500 13.500 21 14 17.500L8 10.500C5 11.500 2 10 2 6z" fill="#fafafa" stroke="#8a8a88" /></svg>
            </span>
            <svg viewBox="0 0 20 24" className="mt-[7px] h-6 w-5"><path d="M2 1.500h11q6 1 5.500 6.500v14h-17v-20z" fill="#f2f2ef" stroke="#8f8f8c" /><path d="M12 2l3 5.500h3" fill="#fff" stroke="#aaa" /></svg>
            <svg viewBox="0 0 24 24" className="mt-[12px] h-6 w-6"><path d="M5 1.500h17V7h-3V5h-3.500v14H11V5H8v2H5z" fill="#55575a" /><path d="M1 7.500L22 23H1z" fill="#8dcf52" stroke="#4e9a06" /><path d="M5 15.500l5 4H5z" fill="#c5eda0" stroke="#4e9a06" /></svg>
            <svg viewBox="0 0 24 22" className="mt-[10px] h-[22px] w-6"><path d="M8 5l4-4 4 4" fill="none" stroke="#666" strokeWidth="1.400" /><rect x="2" y="5" width="20" height="15" rx="1" fill="#e9a33c" stroke="#8f5a10" strokeWidth="2" /><path d="M4 7h16v4H4z" fill="#7f93ad" /><circle cx="9" cy="16" r="2.500" fill="#fff0a0" /><path d="M14 18v-5l-3-3M14 13l4-4" stroke="#33271a" strokeWidth="1.400" fill="none" /></svg>
            <svg viewBox="0 0 24 24" className="mt-[13px] h-6 w-6"><circle cx="12" cy="12" r="9.800" fill="#f6f6f6" stroke="#8a8c87" strokeWidth="2.400" /><circle cx="12" cy="12" r="7.800" fill="none" stroke="#d0d0cc" /><path d="M7 7l7 4-3 3z" fill="#e02828" /><path d="M17 17l-6-3 3-3z" fill="#3b65a8" /></svg>
          </div>
        </div>
      </div>
      <div className="flex h-[20px] shrink-0 items-center border-t border-[#b5b3b0] text-[#96928e]">
        <StatusSep ml="ml-[46px]" />
        <StatusSep ml="ml-[67px]" />
        <svg viewBox="0 0 12 10" className="ml-[9px] h-2.5 w-3"><path d="M0 2h9v6H0zM9 0h3v1h-1v8h1v1H9V9h1V1H9z" fill="currentColor" /></svg>
        <StatusSep ml="ml-[7px]" />
        <svg viewBox="0 0 12 12" className="ml-[10px] h-3 w-3" fill="none"><path d="M8 .5H.5v11H8" stroke="currentColor" /><path d="M8.500 3v6M6 4.500l5 3M11 4.500l-5 3" stroke="#c00" strokeWidth="1.200" /></svg>
        <StatusSep ml="ml-[6px]" />
        <StatusSep ml="ml-[28px]" />
        <svg viewBox="0 0 19 12" className="ml-[10px] h-3 w-[19px]" fill="none"><path d="M0 5.500h14M3.500 0v12" stroke="#1111aa" strokeDasharray="2 1" /><path d="M4 11h11V6" stroke="#222" strokeDasharray="1 1" strokeWidth="1.500" /><path d="M18 0v12" stroke="#111" strokeDasharray="1.500 1" /></svg>
        <StatusSep ml="ml-[3px]" />
        <svg viewBox="0 0 55 11" className="ml-[11px] h-[11px] w-[55px]" fill="none"><path d="M.7.700h4.500L8 3.500v6.800H.7z" stroke="#555" strokeWidth="1.400" /><path d="M5 .700V4h3M14.700.700h4L21.500 3.500v6.800h-6.800zM18.500.700V4h3M24.700.700h4L31.500 3.500v6.800h-6.800zM28.500.700V4h3M41.500 .700L38.700 3.500v6.800h7.500V.700zM46.200.700h4L53.500 3.500v6.800h-7.300zM50 .700V4h3" stroke="#96928e" strokeWidth="1.200" /></svg>
        <StatusSep ml="ml-[8px]" />
        <svg viewBox="0 0 126 12" className="ml-[10px] h-3 w-[126px]"><path d="M0 6h9M117 6h9M121.500 1.500v9" stroke="#8a8782" strokeWidth="2" /><path d="M14 6h98M48.500 0v12" stroke="#b0aeab" strokeWidth="1.600" /><circle cx="62.500" cy="6" r="4" fill="#fff" stroke="#8a8782" strokeWidth="1.200" /></svg>
        <StatusSep ml="ml-[7px]" />
        <span className="ml-[6px] text-[13.33px] tracking-[-0.400px] text-[#4c4c4c]">100%</span>
      </div>
    </div>
  );
}

function StatusSep({ ml }: { ml: string }) {
  return <span className={`h-4 w-px shrink-0 bg-[#96928e] ${ml}`} />;
}

export default function App() {
  return (
    <div className="relative h-[1080px] w-[1920px] overflow-hidden bg-[#2e2c28]">
      <div className="absolute top-[27px] left-0"><Dock /></div>
      <div className="absolute top-[27px] left-[67px]"><FilesWindow /></div>
      <div className="absolute top-[50px] left-[1322px]"><Writer /></div>
      <div className="absolute top-[27px] left-[117px]">
        <FirefoxWindow value="100000" focus="=" shadow="shadow-[0_5px_20px_2px_#000000a0]" />
      </div>
      <div className="absolute top-0 left-0 w-full"><TopBar /></div>
    </div>
  );
}
